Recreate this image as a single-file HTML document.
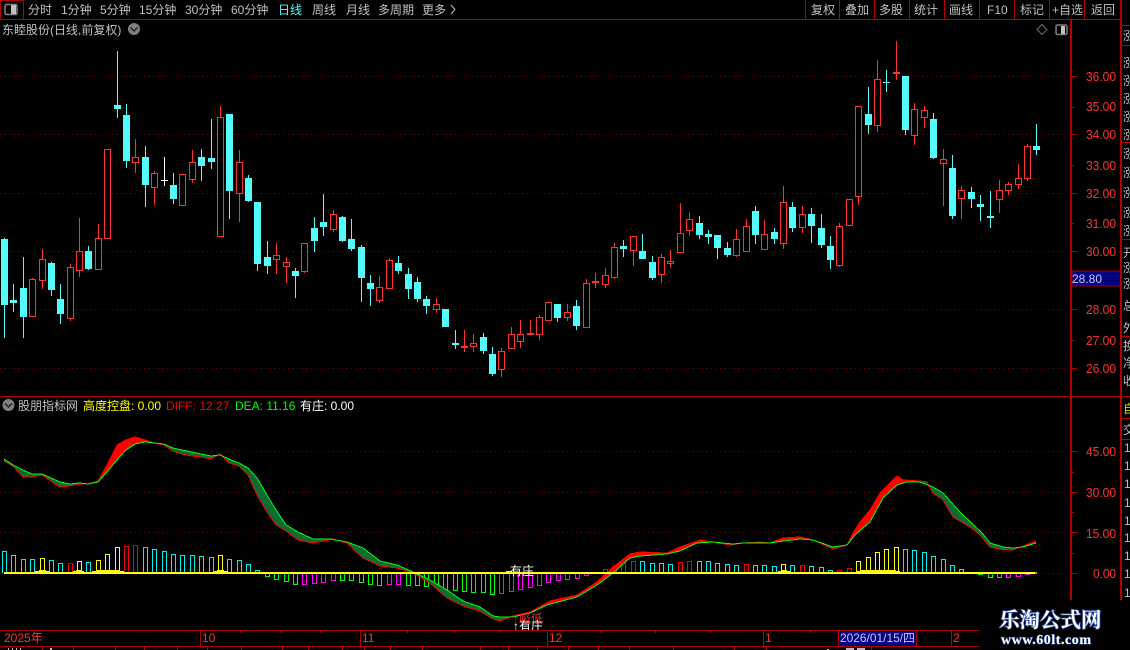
<!DOCTYPE html>
<html><head><meta charset="utf-8"><style>
html,body{margin:0;padding:0;background:#000;width:1130px;height:650px;overflow:hidden}
svg{display:block}
text{font-family:"Liberation Sans","WenQuanYi Zen Hei","Noto Sans CJK SC",sans-serif;font-size:12px}
.t{fill:#c0c0c0}
.a{fill:#ff3232;font-size:13px}
</style></head><body>
<svg width="1130" height="650" viewBox="0 0 1130 650" xmlns="http://www.w3.org/2000/svg">
<rect width="1130" height="650" fill="#000"/>
<g stroke="#780000" stroke-dasharray="1 3.500" fill="none" shape-rendering="crispEdges">
<path d="M0 76.5H1070M0 134.5H1070M0 193.5H1070M0 251.5H1070M0 309.5H1070M0 368.5H1070M0 451.5H1070M0 492.5H1070M0 532.5H1070M0 573.5H1070"/>
</g>
<g shape-rendering="crispEdges">
<path fill="none" stroke="#54fcfc" d="M4.5 238V338M13.5 284V312M23.5 257V338M51.5 262V296M60.5 284V324M88.5 246V270M117.5 51V118M126.5 104V168M145.5 146V207M173.5 173V204M201.5 149V181M211.5 119V169M229.5 114V219M248.5 175V202M257.5 202V271M267.5 241V274M295.5 268V298M314.5 217V252M323.5 194V236M342.5 216V242M351.5 219V251M361.5 245V302M370.5 275V306M398.5 256V274M408.5 268V299M417.5 277V302M426.5 296V314M455.5 330V349M483.5 333V354M492.5 347V376M557.5 304V322M576.5 300V330M623.5 240V257M642.5 234V259M652.5 256V280M699.5 216V239M708.5 230V244M717.5 235V259M727.5 242V257M755.5 206V244M774.5 228V244M792.5 202V232M811.5 208V243M821.5 214V248M830.5 236V269M868.5 87V134M886.5 70V92M905.5 76V135M933.5 113V159M952.5 155V219M971.5 187V208M980.5 195V221M990.5 191V228M1036.5 124V155"/>
<path fill="#54fcfc" d="M1 239h7V305h-7zM10 300h7V303h-7zM20 288h7V317h-7zM48 263h7V290h-7zM57 299h7V314h-7zM85 251h7V269h-7zM114 105h7V109h-7zM123 115h7V161h-7zM142 157h7V185h-7zM170 185h7V199h-7zM198 157h7V166h-7zM208 158h7V162h-7zM226 114h7V191h-7zM245 178h7V201h-7zM254 202h7V264h-7zM264 257h7V266h-7zM292 271h7V276h-7zM311 228h7V241h-7zM320 222h7V227h-7zM339 217h7V241h-7zM348 239h7V249h-7zM358 247h7V278h-7zM367 283h7V289h-7zM395 263h7V271h-7zM405 274h7V289h-7zM414 282h7V299h-7zM423 299h7V306h-7zM442 309h7V327h-7zM452 343h7V345h-7zM480 337h7V351h-7zM489 354h7V374h-7zM554 304h7V318h-7zM573 306h7V326h-7zM620 246h7V249h-7zM639 251h7V259h-7zM649 262h7V278h-7zM696 223h7V235h-7zM705 234h7V237h-7zM714 235h7V248h-7zM724 248h7V255h-7zM752 211h7V235h-7zM771 232h7V239h-7zM789 207h7V228h-7zM808 214h7V226h-7zM818 228h7V245h-7zM827 246h7V260h-7zM865 114h7V125h-7zM883 82h7V83h-7zM902 76h7V130h-7zM930 119h7V158h-7zM949 168h7V216h-7zM968 192h7V199h-7zM977 204h7V207h-7zM987 216h7V218h-7zM1033 146h7V150h-7z"/>
<path fill="none" stroke="#fff" d="M164.5 157V186M161 180.5H168"/>
<path fill="none" stroke="#ff3232" d="M32.5 278V279M42.5 249V259M42.5 281V289M70.5 264V267M70.5 319V321M79.5 218V251M79.5 271V277M98.5 224V238M135.5 139V157M135.5 163V173M154.5 171V173M154.5 188V205M192.5 150V162M192.5 180V183M220.5 106V117M239.5 150V162M239.5 194V222M276.5 243V255M276.5 260V274M286.5 257V262M286.5 267V283M304.5 272V273M333.5 210V214M333.5 230V232M379.5 276V287M379.5 301V303M389.5 258V260M436.5 298V304M436.5 310V313M464.5 330V352M473.5 334V343M473.5 347V352M501.5 348V351M501.5 370V377M511.5 327V334M520.5 320V334M520.5 342V348M530.5 320V335M539.5 315V317M539.5 335V340M567.5 304V312M567.5 318V321M586.5 279V283M595.5 273V288M605.5 268V275M605.5 285V288M614.5 243V247M614.5 278V279M633.5 251V266M661.5 254V257M661.5 275V283M670.5 250V261M670.5 264V268M680.5 203V233M689.5 212V219M689.5 231V236M736.5 229V239M736.5 256V257M746.5 219V226M764.5 220V234M783.5 186V202M783.5 244V249M802.5 206V214M802.5 228V233M839.5 223V226M839.5 266V267M858.5 197V205M877.5 60V79M877.5 126V132M896.5 41V80M914.5 103V109M914.5 136V145M924.5 106V110M924.5 118V128M943.5 149V159M943.5 164V206M961.5 186V190M961.5 199V219M999.5 180V190M999.5 200V213M1008.5 182V184M1008.5 191V195M1018.5 164V178M1018.5 185V189M1027.5 144V146M1027.5 179V181"/>
<path fill="none" stroke="#ff3232" d="M29.5 279.5h6V316.5h-6zM39.5 259.5h6V280.5h-6zM67.5 267.5h6V318.5h-6zM76.5 251.5h6V270.5h-6zM95.5 238.5h6V269.5h-6zM104.5 149.5h6V238.5h-6zM132.5 157.5h6V162.5h-6zM151.5 173.5h6V187.5h-6zM179.5 174.5h6V205.5h-6zM189.5 162.5h6V179.5h-6zM217.5 117.5h6V236.5h-6zM236.5 162.5h6V193.5h-6zM273.5 255.5h6V259.5h-6zM283.5 262.5h6V266.5h-6zM301.5 243.5h6V271.5h-6zM330.5 214.5h6V229.5h-6zM376.5 287.5h6V300.5h-6zM386.5 260.5h6V288.5h-6zM433.5 304.5h6V309.5h-6zM470.5 343.5h6V346.5h-6zM498.5 351.5h6V369.5h-6zM508.5 334.5h6V348.5h-6zM517.5 334.5h6V341.5h-6zM536.5 317.5h6V334.5h-6zM545.5 302.5h6V320.5h-6zM564.5 312.5h6V317.5h-6zM583.5 283.5h6V327.5h-6zM602.5 275.5h6V284.5h-6zM611.5 247.5h6V277.5h-6zM630.5 236.5h6V250.5h-6zM658.5 257.5h6V274.5h-6zM667.5 261.5h6V263.5h-6zM677.5 233.5h6V252.5h-6zM686.5 219.5h6V230.5h-6zM733.5 239.5h6V255.5h-6zM743.5 226.5h6V251.5h-6zM761.5 234.5h6V249.5h-6zM780.5 202.5h6V243.5h-6zM799.5 214.5h6V227.5h-6zM836.5 226.5h6V265.5h-6zM846.5 199.5h6V225.5h-6zM855.5 106.5h6V196.5h-6zM874.5 79.5h6V125.5h-6zM911.5 109.5h6V135.5h-6zM921.5 110.5h6V117.5h-6zM940.5 159.5h6V163.5h-6zM958.5 190.5h6V198.5h-6zM996.5 190.5h6V199.5h-6zM1005.5 184.5h6V190.5h-6zM1015.5 178.5h6V184.5h-6zM1024.5 146.5h6V178.5h-6z"/>
<path fill="#ff3232" d="M461 346h7v2h-7zM527 333h7v2h-7zM592 281h7v2h-7zM893 72h7v2h-7z"/>
<!-- MACD bars -->
<path fill="none" stroke="#00f0f0" d="M2.5 573V551.5h4V573M11.5 573V555.5h4V573M21.5 573V559.5h4V573M30.5 573V559.5h4V573M49.5 573V560.5h4V573M58.5 573V563.5h4V573M86.5 573V562.5h4V573M143.5 573V547.5h4V573M152.5 573V549.5h4V573M162.5 573V551.5h4V573M171.5 573V554.5h4V573M180.5 573V555.5h4V573M190.5 573V555.5h4V573M199.5 573V556.5h4V573M209.5 573V557.5h4V573M227.5 573V559.5h4V573M237.5 573V560.5h4V573M246.5 573V564.5h4V573M255.5 573V570.5h4V573M640.5 573V561.5h4V573M650.5 573V563.5h4V573M659.5 573V563.5h4V573M668.5 573V564.5h4V573M697.5 573V561.5h4V573M706.5 573V561.5h4V573M715.5 573V563.5h4V573M725.5 573V564.5h4V573M734.5 573V565.5h4V573M753.5 573V565.5h4V573M762.5 573V565.5h4V573M772.5 573V566.5h4V573M790.5 573V565.5h4V573M809.5 573V566.5h4V573M819.5 573V567.5h4V573M828.5 573V570.5h4V573M903.5 573V549.5h4V573M912.5 573V550.5h4V573M922.5 573V552.5h4V573M931.5 573V556.5h4V573M941.5 573V559.5h4V573M950.5 573V565.5h4V573M959.5 573V569.5h4V573"/>
<path fill="none" stroke="#ffff00" d="M40.5 573V558.5h4V573M77.5 573V561.5h4V573M96.5 573V560.5h4V573M105.5 573V554.5h4V573M115.5 573V547.5h4V573M218.5 573V555.5h4V573M781.5 573V564.5h4V573M856.5 573V561.5h4V573M866.5 573V557.5h4V573M875.5 573V552.5h4V573M884.5 573V549.5h4V573M894.5 573V547.5h4V573"/>
<path fill="none" stroke="#f00000" d="M68.5 573V563.5h4V573M124.5 573V546.5h4V573M133.5 573V545.5h4V573M603.5 573V569.5h4V573M612.5 573V566.5h4V573M621.5 573V563.5h4V573M631.5 573V561.5h4V573M678.5 573V562.5h4V573M687.5 573V561.5h4V573M744.5 573V564.5h4V573M800.5 573V565.5h4V573M837.5 573V570.5h4V573M847.5 573V568.5h4V573"/>
<path fill="none" stroke="#00ff00" d="M265.5 574V576.5h4V574M274.5 574V579.5h4V574M284.5 574V581.5h4V574M293.5 574V584.5h4V574M340.5 574V580.5h4V574M349.5 574V580.5h4V574M359.5 574V582.5h4V574M368.5 574V584.5h4V574M377.5 574V585.5h4V574M406.5 574V585.5h4V574M415.5 574V585.5h4V574M424.5 574V586.5h4V574M434.5 574V587.5h4V574M443.5 574V589.5h4V574M453.5 574V590.5h4V574M462.5 574V591.5h4V574M471.5 574V592.5h4V574M481.5 574V592.5h4V574M490.5 574V594.5h4V574M978.5 574V574.5h4V574M988.5 574V577.5h4V574M997.5 574V577.5h4V574"/>
<path fill="none" stroke="#ff00ff" d="M302.5 574V584.5h4V574M312.5 574V583.5h4V574M321.5 574V582.5h4V574M331.5 574V580.5h4V574M387.5 574V584.5h4V574M396.5 574V584.5h4V574M499.5 574V593.5h4V574M509.5 574V591.5h4V574M518.5 574V589.5h4V574M528.5 574V587.5h4V574M537.5 574V585.5h4V574M546.5 574V582.5h4V574M556.5 574V580.5h4V574M565.5 574V579.5h4V574M575.5 574V578.5h4V574M584.5 574V575.5h4V574M1006.5 574V577.5h4V574M1016.5 574V576.5h4V574M1025.5 574V574.5h4V574"/>
<!-- DIFF/DEA band -->
<polygon fill="#0b6b33" points="4,459 13,465 23,470 32,474 42,474 51,478 60,482 70,484 79,483 88,484 98,482 107,472 117,460 126,450 135,444 145,442 154,443 164,444 173,448 182,450 192,452 201,454 211,456 220,455 229,459 239,463 248,468 257,478 267,495 276,510 286,525 298,532 313,539 330,539 347,542 363,548 380,561 397,565 413,572 430,580 447,590 463,601 480,607 493,616 500,617 513,617 530,613 547,605 577,597 597,585 613,573 630,558 640,556 667,554 680,551 697,543 713,542 733,544 743,543 760,543 770,543 783,541 800,539 813,540 833,547 847,545 855,535 870,522 883,498 897,485 907,482 920,482 933,487 943,493 960,512 983,534 990,543 1003,547 1013,548 1023,547 1036,543 1036,541 1023,546 1013,550 1003,550 990,547 980,535 970,527 953,517 943,500 933,493 927,482 920,481 903,480 897,476 880,493 870,510 860,522 853,533 847,545 833,549 813,540 800,537 783,538 770,543 760,542 743,543 730,545 713,542 700,540 680,547 667,553 640,552 630,554 613,567 597,582 577,595 550,601 530,612 513,616 500,621 493,619 480,611 463,606 447,598 430,583 413,573 397,568 380,566 363,558 347,543 333,539 328,540 313,543 298,540 286,531 276,525 267,512 257,495 248,475 239,466 229,463 220,454 211,459 201,457 192,456 182,454 173,451 164,445 154,443 145,440 135,437 126,440 117,445 107,465 98,481 88,484 79,484 70,486 60,487 51,481 42,475 32,477 23,477 13,466 4,461"/>
<g fill="#ff0000">
<polygon points="98,481 107,465 117,445 126,440 135,437 145,440 154,443 145,442 135,444 126,450 117,460 107,472 98,482"/>
<polygon points="513,616 530,612 550,601 577,595 597,582 613,567 630,554 640,552 667,553 680,547 700,540 713,542 697,543 680,551 667,554 640,556 630,558 613,573 597,585 577,597 547,605 530,613 513,617"/>
<polygon points="770,543 783,538 800,537 813,540 800,539 783,541"/>
<polygon points="847,545 853,533 860,522 870,510 880,493 897,476 903,480 920,481 927,482 920,482 907,482 897,485 883,498 870,522 855,535"/>
<polygon points="1013,549 1023,546 1036,541 1036,543 1023,547"/>
</g>
<polyline fill="none" stroke="#ff0000" points="4,461 13,466 23,477 32,477 42,475 51,481 60,487 70,486 79,484 88,484 98,481 107,465 117,445 126,440 135,437 145,440 154,443 164,445 173,451 182,454 192,456 201,457 211,459 220,454 229,463 239,466 248,475 257,495 267,512 276,525 286,531 298,540 313,543 328,540 333,539 347,543 363,558 380,566 397,568 413,573 430,583 447,598 463,606 480,611 493,619 500,621 513,616 530,612 550,601 577,595 597,582 613,567 630,554 640,552 667,553 680,547 700,540 713,542 730,545 743,543 760,542 770,543 783,538 800,537 813,540 833,549 847,545 853,533 860,522 870,510 880,493 897,476 903,480 920,481 927,482 933,493 943,500 953,517 970,527 980,535 990,547 1003,550 1013,550 1023,546 1036,541"/>
<polyline fill="none" stroke="#00ff00" points="4,459 13,465 23,470 32,474 42,474 51,478 60,482 70,484 79,483 88,484 98,482 107,472 117,460 126,450 135,444 145,442 154,443 164,444 173,448 182,450 192,452 201,454 211,456 220,455 229,459 239,463 248,468 257,478 267,495 276,510 286,525 298,532 313,539 330,539 347,542 363,548 380,561 397,565 413,572 430,580 447,590 463,601 480,607 493,616 500,617 513,617 530,613 547,605 577,597 597,585 613,573 630,558 640,556 667,554 680,551 697,543 713,542 733,544 743,543 760,543 770,543 783,541 800,539 813,540 833,547 847,545 855,535 870,522 883,498 897,485 907,482 920,482 933,487 943,493 960,512 983,534 990,543 1003,547 1013,548 1023,547 1036,543"/>
<!-- zero lines -->
<rect x="4" y="572" width="1033" height="1" fill="#ffff00"/>
<rect x="4" y="573" width="1033" height="1" fill="#fff"/>
<rect x="1035" y="572" width="2" height="2" fill="#ff8000"/>
<path fill="#ffff00" d="M35 571h14v1H35zM39 570h7v1h-7zM73 571h11v1H73zM76 570h6v1h-6zM92 571h32v1H92zM97 570h23v1H97zM214 571h14v1h-14zM217 570h7v1h-7zM778 571h12v1h-12zM781 570h6v1h-6zM856 571h44v1h-44zM860 570h36v1h-36zM506 571h6v1h-6z"/>
</g>
<text x="510" y="575" fill="#fff">有庄</text>
<text x="513" y="623" fill="#ff2020" font-size="12">↑吸低</text>
<text x="513" y="630" fill="#fff">↑有庄</text>
<rect x="0" y="630" width="980" height="20" fill="#000"/>

<g shape-rendering="crispEdges" fill="none" stroke="#b00000">
<path d="M0 19.5H1121M0 396.5H1121M0 630.5H979M0 646.5H979"/>
<path d="M0.5 0V19M0 0.5H23M23.5 0V19M805.5 0V19M839.5 0V19M874.5 0V19M909.5 0V19M944.5 0V19M979.5 0V19M1014.5 0V19M1049.5 0V19M1084.5 0V19"/>
<path stroke-width="2" d="M1071 19V600M1121 0V600"/>
<path d="M1121 25.5H1130M1121 45.5H1130M1121 142.5H1130M1121 239.5H1130M1121 336.5H1130M1121 396.5H1130M1121 418.5H1130M1121 439.5H1130"/>
<path d="M1071 76.5H1077M1071 107.5H1074M1071 134.5H1077M1071 165.5H1074M1071 193.5H1077M1071 223.5H1074M1071 251.5H1077M1071 309.5H1077M1071 340.5H1074M1071 368.5H1077M1071 451.5H1077M1071 472.5H1074M1071 492.5H1077M1071 512.5H1074M1071 532.5H1077M1071 553.5H1074M1071 573.5H1077"/>
<path d="M200.5 630V646M360.5 630V646M547.5 630V646M763.5 630V646M951.5 630V646"/>
<path d="M240.5 631V633M280.5 631V633M320.5 631V633M407.5 631V633M454.5 631V633M500.5 631V633M600.5 631V633M655.5 631V633M710.5 631V633M810.5 631V633"/>
<path d="M42.5 647V650M73.5 647V650M115.5 647V650M144.5 647V650M177.5 647V650M207.5 647V650M241.5 647V650M282.5 647V650M308.5 647V650M342.5 647V650M364.5 647V650M390.5 647V650M422.5 647V650M480.5 647V650M508.5 647V650M537.5 647V650M568.5 647V650M598.5 647V650M629.5 647V650M673.5 647V650M734.5 647V650M766.5 647V650M871.5 647V650"/>
</g>
<path fill="#b8b8b8" shape-rendering="crispEdges" d="M8 648h1v2H8zM12 648h1v2h-1zM16 648h1v2h-1zM20 648h1v2h-1zM50 648h2v2h-2zM827 649h2v1h-2zM846 648h8v2h-8zM857 648h8v2h-8z"/>

<!-- top bar -->
<rect x="5" y="4.500" width="12" height="10" rx="1.500" fill="none" stroke="#808080" stroke-width="1.500"/>
<rect x="11" y="5" width="5" height="9" fill="#c0c0c0"/>
<g class="t">
<text x="28" y="14" class="t">分时</text>
<text x="61" y="14" class="t">1分钟</text>
<text x="100" y="14" class="t">5分钟</text>
<text x="139" y="14" class="t">15分钟</text>
<text x="185" y="14" class="t">30分钟</text>
<text x="231" y="14" class="t">60分钟</text>
<text x="278" y="14" fill="#54fcfc">日线</text>
<text x="312" y="14" class="t">周线</text>
<text x="346" y="14" class="t">月线</text>
<text x="378" y="14" class="t">多周期</text>
<text x="422" y="14" class="t">更多</text>
<text x="811" y="14" class="t">复权</text>
<text x="845" y="14" class="t">叠加</text>
<text x="879" y="14" class="t">多股</text>
<text x="914" y="14" class="t">统计</text>
<text x="949" y="14" class="t">画线</text>
<text x="987" y="14" class="t">F10</text>
<text x="1020" y="14" class="t">标记</text>
<text x="1052" y="14" class="t">+自选</text>
<text x="1091" y="14" class="t">返回</text>
</g>
<path d="M451 5l4 4.500l-4 4.500" fill="none" stroke="#c0c0c0"/>

<text x="2" y="34" class="t">东睦股份(日线,前复权)</text>
<circle cx="134" cy="29" r="6" fill="#808080"/>
<path d="M130.500 27.500l3.500 3.500l3.500-3.500" fill="none" stroke="#222" stroke-width="1.500"/>
<path d="M1042 24.500l5 5l-5 5l-5-5z" fill="none" stroke="#707070"/>
<rect x="1056" y="25" width="11" height="9.500" rx="1.500" fill="none" stroke="#808080" stroke-width="1.500"/>
<rect x="1061" y="26" width="4" height="8" fill="#c0c0c0"/>

<!-- price axis labels -->
<g>
<text class="a" x="1086" y="81" textLength="30" lengthAdjust="spacingAndGlyphs">36.00</text>
<text class="a" x="1086" y="111" textLength="30" lengthAdjust="spacingAndGlyphs">35.00</text>
<text class="a" x="1086" y="139" textLength="30" lengthAdjust="spacingAndGlyphs">34.00</text>
<text class="a" x="1086" y="170" textLength="30" lengthAdjust="spacingAndGlyphs">33.00</text>
<text class="a" x="1086" y="198" textLength="30" lengthAdjust="spacingAndGlyphs">32.00</text>
<text class="a" x="1086" y="228" textLength="30" lengthAdjust="spacingAndGlyphs">31.00</text>
<text class="a" x="1086" y="256" textLength="30" lengthAdjust="spacingAndGlyphs">30.00</text>
<text class="a" x="1086" y="314" textLength="30" lengthAdjust="spacingAndGlyphs">28.00</text>
<text class="a" x="1086" y="345" textLength="30" lengthAdjust="spacingAndGlyphs">27.00</text>
<text class="a" x="1086" y="373" textLength="30" lengthAdjust="spacingAndGlyphs">26.00</text>
<text class="a" x="1086" y="456" textLength="30" lengthAdjust="spacingAndGlyphs">45.00</text>
<text class="a" x="1086" y="497" textLength="30" lengthAdjust="spacingAndGlyphs">30.00</text>
<text class="a" x="1086" y="538" textLength="30" lengthAdjust="spacingAndGlyphs">15.00</text>
<text class="a" x="1093" y="578" textLength="23" lengthAdjust="spacingAndGlyphs">0.00</text>
</g>
<rect x="1072" y="271" width="48.500" height="15" fill="#000080" stroke="#b00000" stroke-width="1" shape-rendering="crispEdges"/>
<text x="1072" y="283" fill="#c8c8ff" font-size="13" textLength="30" lengthAdjust="spacingAndGlyphs">28.80</text>

<!-- sub header -->
<circle cx="8.500" cy="405" r="6" fill="#808080"/>
<path d="M5 403.500l3.500 3.500l3.500-3.500" fill="none" stroke="#222" stroke-width="1.500"/>
<text x="18" y="410" class="t">股朋指标网</text>
<text x="83" y="410" fill="#ffff00">高度控盘: 0.00</text>
<text x="166" y="410" fill="#ff0000">DIFF: 12.27</text>
<text x="235" y="410" fill="#00ff00">DEA: 11.16</text>
<text x="300" y="410" fill="#fff">有庄: 0.00</text>

<!-- date axis -->
<rect x="839" y="631" width="77" height="15" fill="#000080"/>
<text x="4" y="642" fill="#ff3232">2025年</text>
<text x="202" y="642" fill="#ff3232">10</text>
<text x="362" y="642" fill="#ff3232">11</text>
<text x="549" y="642" fill="#ff3232">12</text>
<text x="765" y="642" fill="#ff3232">1</text>
<text x="840" y="642" fill="#c8c8ff" textLength="75" lengthAdjust="spacingAndGlyphs">2026/01/15/四</text>
<text x="953" y="642" fill="#ff3232">2</text>
<path d="M838.500 631V646M916.500 631V646" stroke="#b00000" shape-rendering="crispEdges"/>

<!-- right column clipped text -->
<g class="t">
<text x="1123" y="40" class="t">涨</text>
<text x="1123" y="67" class="t">涨</text>
<text x="1123" y="85" class="t">涨</text>
<text x="1123" y="103" class="t">涨</text>
<text x="1123" y="121" class="t">涨</text>
<text x="1123" y="139" class="t">涨</text>
<text x="1123" y="158" class="t">涨</text>
<text x="1123" y="177" class="t">涨</text>
<text x="1123" y="197" class="t">涨</text>
<text x="1123" y="217" class="t">涨</text>
<text x="1123" y="235" class="t">涨</text>
<text x="1123" y="257" class="t">开</text>
<text x="1123" y="272" class="t">涨</text>
<text x="1123" y="288" class="t">涨</text>
<text x="1123" y="310" class="t">总</text>
<text x="1123" y="332" class="t">外</text>
<text x="1123" y="350" class="t">换</text>
<text x="1123" y="367" class="t">净</text>
<text x="1123" y="385" class="t">收</text>
<text x="1123" y="413" fill="#d8d800">自</text>
<text x="1123" y="434" class="t">交</text>
<text x="1124" y="452" class="t">1</text>
<text x="1124" y="470" class="t">1</text>
<text x="1124" y="488" class="t">1</text>
<text x="1124" y="507" class="t">1</text>
<text x="1124" y="525" class="t">1</text>
<text x="1124" y="542" class="t">1</text>
<text x="1124" y="560" class="t">1</text>
<text x="1124" y="578" class="t">1</text>
<text x="1124" y="597" class="t">1</text>
</g>

<!-- watermark -->
<rect x="980" y="600" width="150" height="50" fill="#000"/>
<g font-weight="700" text-anchor="start">
<text x="999" y="627" style="font-family:'Noto Serif CJK SC','Liberation Serif',serif;font-size:20.500px;font-weight:700" fill="#2a4fa8" stroke="#2a4fa8" stroke-width="1.500">乐淘公式网</text>
<text x="999" y="627" style="font-family:'Noto Serif CJK SC','Liberation Serif',serif;font-size:20.500px;font-weight:700" fill="#fff">乐淘公式网</text>
<text x="1001" y="644" textLength="90" lengthAdjust="spacing" style="font-family:'Liberation Serif',serif;font-size:14px;font-weight:700" fill="#2a4fa8" stroke="#2a4fa8" stroke-width="1">www.60lt.com</text>
<text x="1001" y="644" textLength="90" lengthAdjust="spacing" style="font-family:'Liberation Serif',serif;font-size:14px;font-weight:700" fill="#fff">www.60lt.com</text>
</g>
</svg>
</body></html>
